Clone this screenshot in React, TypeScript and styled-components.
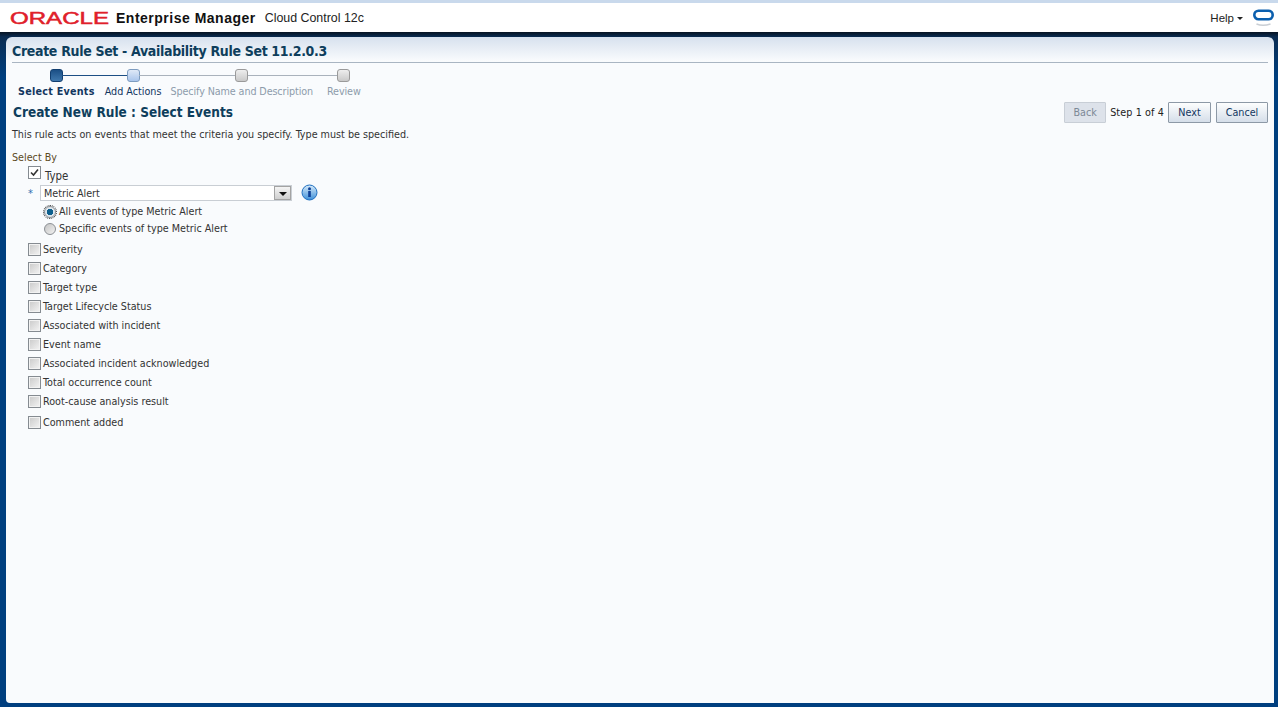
import React from "react";
import styled, { createGlobalStyle } from "styled-components";

const GlobalStyle = createGlobalStyle`
  html, body {
    margin: 0;
    padding: 0;
    height: 100%;
    overflow: hidden;
  }
  body {
    font-family: "DejaVu Sans Condensed", "DejaVu Sans", sans-serif;
    font-size: 10.7px;
    color: #333;
  }
`;

const Page = styled.div`
  display: flex;
  flex-direction: column;
  height: 707px;
  background: #003f7f;
`;

const Header = styled.header`
  display: flex;
  align-items: center;
  height: 29px;
  padding: 0 4px 0 10px;
  background: #fff;
  border-top: 3px solid #c9d9ec;
`;

const LogoMark = styled.svg`
  display: block;
  width: 100px;
  height: 18px;
  margin-right: 6px;
`;

const ProductName = styled.span`
  font-family: "Liberation Sans", sans-serif;
  font-size: 14px;
  font-weight: 700;
  letter-spacing: 0.5px;
  color: #111;
`;

const ProductSub = styled.span`
  margin-left: 9px;
  font-family: "Liberation Sans", sans-serif;
  font-size: 12.4px;
  color: #222;
`;

const HelpMenu = styled.span`
  display: flex;
  align-items: center;
  gap: 3px;
  margin-left: auto;
  font-family: "Liberation Sans", sans-serif;
  font-size: 11.5px;
  color: #222;
`;

const Caret = styled.i`
  width: 0;
  height: 0;
  margin-top: 2px;
  border: 3px solid transparent;
  border-top: 3px solid #222;
  border-bottom: 0;
`;

const RingMark = styled.svg`
  display: block;
  width: 22px;
  height: 24px;
  margin-left: 9px;
`;

const DarkStrip = styled.div`
  height: 5px;
  background: linear-gradient(#071322, #0a2c52);
`;

const Shell = styled.div`
  flex: 1;
  display: flex;
  min-height: 0;
  padding: 0 4px 4px 6px;
  background: linear-gradient(#0a2c52, #003f7f 40px);
`;

const Panel = styled.main`
  flex: 1;
  padding: 6px 6px 0 6px;
  border-radius: 6px 6px 0 4px;
  background: linear-gradient(#d7e1ee, #f9fbfd 24px);
`;

const PageTitle = styled.h1`
  margin: 0;
  padding-bottom: 2px;
  border-bottom: 1px solid #a9b5c2;
  font-size: 14px;
  font-weight: 700;
  line-height: 17px;
  letter-spacing: -0.33px;
  color: #0e3e5c;
`;

const Train = styled.ol`
  display: flex;
  margin: 6px 0 0 6px;
  padding: 0;
  list-style: none;
`;

const Step = styled.li<{ $state: "done" | "next" | "off"; $gap: number; $reach: number }>`
  position: relative;
  display: flex;
  flex-direction: column;
  align-items: center;
  gap: 3px;
  margin-right: ${(p) => p.$gap}px;
  font-weight: ${(p) => (p.$state === "done" ? 700 : 400)};
  line-height: 13px;
  letter-spacing: ${(p) => (p.$state === "done" ? "0.25px" : p.$state === "off" ? "-0.1px" : "0")};
  white-space: nowrap;
  color: ${(p) => (p.$state === "off" ? "#8d9bab" : "#12365f")};

  &::after {
    content: "";
    display: ${(p) => (p.$reach ? "block" : "none")};
    position: absolute;
    top: 6px;
    left: calc(50% + 6px);
    width: ${(p) => p.$reach}px;
    height: 1px;
    background: ${(p) => (p.$state === "done" ? "#1d4f85" : "#a9b2bc")};
  }
`;

const StepDot = styled.span<{ $state: "done" | "next" | "off" }>`
  width: 11px;
  height: 11px;
  border-radius: 3px;
  border: 1px solid
    ${(p) => (p.$state === "done" ? "#123f70" : p.$state === "next" ? "#7d9cc0" : "#9a9a9a")};
  background: ${(p) =>
    p.$state === "done"
      ? "linear-gradient(#1b4f86, #3f78ad)"
      : p.$state === "next"
        ? "linear-gradient(#dfe9f7, #a9c5ec)"
        : "linear-gradient(#eee, #c9c9c9)"};
`;

const SubHeader = styled.div`
  display: flex;
  align-items: center;
  margin: 3px 0 0 1px;
  height: 22px;
`;

const SubTitle = styled.h2`
  margin: 0;
  font-size: 13.5px;
  font-weight: 700;
  color: #0e3e5c;
`;

const WizardNav = styled.div`
  display: flex;
  align-items: center;
  margin-left: auto;
  color: #222;
`;

const NavButton = styled.button<{ $disabled?: boolean; $width: number }>`
  box-sizing: border-box;
  width: ${(p) => p.$width}px;
  height: 21px;
  padding: 0;
  margin-left: ${(p) => (p.$disabled ? 0 : 5)}px;
  border: 1px solid ${(p) => (p.$disabled ? "#c8ced6" : "#8d99a6")};
  border-radius: 1px;
  font-family: inherit;
  font-size: 10.7px;
  color: ${(p) => (p.$disabled ? "#7c8896" : "#12365f")};
  background: ${(p) => (p.$disabled ? "#dde2ea" : "linear-gradient(#fdfefe, #d5dee9)")};
`;

const StepCount = styled.span`
  margin: 0 -1px 0 4px;
  letter-spacing: 0.12px;
`;

const Hint = styled.p`
  margin: 5px 0 0 0;
  line-height: 13px;
  color: #333;
`;

const SectionLabel = styled.div`
  margin-top: 10px;
  line-height: 13px;
  color: #5c4a1e;
`;

const TypeBlock = styled.div`
  margin: 0 0 0 16px;
`;

const Row = styled.label<{ $height?: number }>`
  display: flex;
  align-items: center;
  gap: 2px;
  height: ${(p) => p.$height ?? 19}px;
  line-height: 13px;
  white-space: nowrap;
  color: #333;
`;

const Box = styled.span<{ $checked?: boolean }>`
  flex: none;
  display: flex;
  align-items: center;
  justify-content: center;
  box-sizing: border-box;
  width: 13px;
  height: 13px;
  border: 1px solid #858b91;
  background: ${(p) => (p.$checked ? "#fff" : "linear-gradient(135deg, #c9c9c9, #f4f4f4)")};
  box-shadow: ${(p) => (p.$checked ? "none" : "inset 0 0 0 1px #f2f2f2")};
`;

const TypeText = styled.span`
  margin-left: 2px;
  padding-top: 8px;
  font-size: 11.4px;
`;

const SelectRow = styled.div`
  display: flex;
  align-items: center;
  height: 17px;
  margin-top: 4px;
`;

const Required = styled.span`
  width: 12px;
  padding-top: 1px;
  font-size: 11px;
  color: #2f6fae;
`;

const SelectBox = styled.div`
  display: flex;
  align-items: center;
  box-sizing: border-box;
  width: 252px;
  height: 16px;
  padding: 1px 0 0 3px;
  border: 1px solid #c9ced4;
  background: #fff;
`;

const SelectArrow = styled.span`
  display: flex;
  align-items: center;
  justify-content: center;
  width: 15px;
  height: 12px;
  margin-left: auto;
  border: 1px solid #a3a3a3;
  background: linear-gradient(#f4f4f4, #cfcfcf);
`;

const ArrowGlyph = styled.i`
  width: 0;
  height: 0;
  margin-top: 2px;
  border: 4px solid transparent;
  border-top: 4px solid #111;
  border-bottom: 0;
`;

const InfoIcon = styled.svg`
  display: block;
  width: 17px;
  height: 17px;
  margin: 0 0 0 9px;
`;

const RadioGroup = styled.div`
  margin: 2px 0 0 16px;
`;

const RadioRow = styled.label`
  display: flex;
  align-items: center;
  gap: 3px;
  height: 17px;
  color: #333;
`;

const RadioDot = styled.span<{ $on?: boolean }>`
  flex: none;
  box-sizing: border-box;
  width: 12px;
  height: 12px;
  border-radius: 50%;
  border: 1px solid #8b8f94;
  background: ${(p) =>
    p.$on
      ? "radial-gradient(circle, #0d5f8d 0 3px, #dfe6ec 3.5px)"
      : "linear-gradient(135deg, #c4c4c4, #f2f2f2)"};
  outline: ${(p) => (p.$on ? "1px dotted #333" : "none")};
`;

const Options = styled.div`
  margin: 3px 0 0 16px;
`;

const checkboxes = [
  "Severity",
  "Category",
  "Target type",
  "Target Lifecycle Status",
  "Associated with incident",
  "Event name",
  "Associated incident acknowledged",
  "Total occurrence count",
  "Root-cause analysis result",
];

const steps: { label: string; state: "done" | "next" | "off"; reach: number; gap: number }[] = [
  { label: "Select Events", state: "done", reach: 65, gap: 10 },
  { label: "Add Actions", state: "next", reach: 97, gap: 9 },
  { label: "Specify Name and Description", state: "off", reach: 91, gap: 14 },
  { label: "Review", state: "off", reach: 0, gap: 0 },
];

export default function App() {
  return (
    <Page>
      <GlobalStyle />
      <Header>
        <LogoMark viewBox="0 0 100 18">
          <text
            x="0"
            y="15"
            textLength="99"
            lengthAdjust="spacingAndGlyphs"
            fontFamily="Liberation Sans"
            fontSize="16.5"
            fill="#e0202a"
            stroke="#e0202a"
            strokeWidth="0.5"
          >
            ORACLE
          </text>
        </LogoMark>
        <ProductName>Enterprise Manager</ProductName>
        <ProductSub>Cloud Control 12c</ProductSub>
        <HelpMenu>
          Help
          <Caret />
        </HelpMenu>
        <RingMark viewBox="0 0 22 24">
          <rect x="2.3" y="4.8" width="18.4" height="8.4" rx="4.2" fill="none" stroke="#0b5fae" strokeWidth="2.6" />
          <path d="M4.5 18c4 1.6 9 1.6 14 0" fill="none" stroke="#c9ced4" strokeWidth="1.5" />
        </RingMark>
      </Header>
      <DarkStrip />
      <Shell>
        <Panel>
          <PageTitle>Create Rule Set - Availability Rule Set 11.2.0.3</PageTitle>
          <Train>
            {steps.map((s) => (
              <Step key={s.label} $state={s.state} $reach={s.reach} $gap={s.gap}>
                <StepDot $state={s.state} />
                {s.label}
              </Step>
            ))}
          </Train>
          <SubHeader>
            <SubTitle>Create New Rule : Select Events</SubTitle>
            <WizardNav>
              <NavButton $disabled $width={42}>Back</NavButton>
              <StepCount>Step 1 of 4</StepCount>
              <NavButton $width={43}>Next</NavButton>
              <NavButton $width={52}>Cancel</NavButton>
            </WizardNav>
          </SubHeader>
          <Hint>This rule acts on events that meet the criteria you specify. Type must be specified.</Hint>
          <SectionLabel>Select By</SectionLabel>
          <TypeBlock>
            <Row $height={16}>
              <Box $checked>
                <svg width="11" height="11" viewBox="0 0 11 11">
                  <path d="M2 5.5l2.5 2.5L9 2.5" fill="none" stroke="#333" strokeWidth="1.6" />
                </svg>
              </Box>
              <TypeText>Type</TypeText>
            </Row>
            <SelectRow>
              <Required>*</Required>
              <SelectBox>
                Metric Alert
                <SelectArrow>
                  <ArrowGlyph />
                </SelectArrow>
              </SelectBox>
              <InfoIcon viewBox="0 0 17 17">
                <defs>
                  <linearGradient id="infoFill" x1="0" y1="0" x2="0" y2="1">
                    <stop offset="0" stopColor="#d8ecfb" />
                    <stop offset="1" stopColor="#3d8fd8" />
                  </linearGradient>
                </defs>
                <circle cx="8.5" cy="8.5" r="7.5" fill="url(#infoFill)" stroke="#1f6fc0" />
                <rect x="7.2" y="7" width="2.6" height="6" fill="#0d3f96" />
                <circle cx="8.5" cy="4.8" r="1.5" fill="#0d3f96" />
              </InfoIcon>
            </SelectRow>
            <RadioGroup>
              <RadioRow>
                <RadioDot $on />
                All events of type Metric Alert
              </RadioRow>
              <RadioRow>
                <RadioDot />
                Specific events of type Metric Alert
              </RadioRow>
            </RadioGroup>
          </TypeBlock>
          <Options>
            {checkboxes.map((c) => (
              <Row key={c}>
                <Box />
                {c}
              </Row>
            ))}
            <Row $height={23}>
              <Box />
              Comment added
            </Row>
          </Options>
        </Panel>
      </Shell>
    </Page>
  );
}
